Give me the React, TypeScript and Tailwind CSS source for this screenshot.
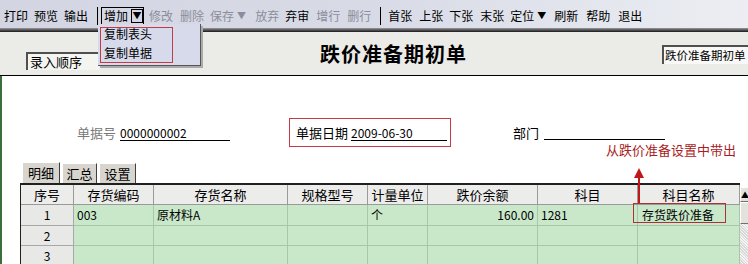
import { ReactNode } from "react";

type Tool = { label: string; ml: string; off?: boolean; caret?: boolean };

const leftTools: Tool[] = [
  { label: "打印", ml: "ml-[4px]" },
  { label: "预览", ml: "ml-[6px]" },
  { label: "输出", ml: "ml-[6px]" },
];

const midTools: Tool[] = [
  { label: "修改", ml: "ml-[5px]", off: true },
  { label: "删除", ml: "ml-[7px]", off: true },
  { label: "保存", ml: "ml-[6px]", off: true, caret: true },
  { label: "放弃", ml: "ml-[9px]", off: true },
  { label: "弃审", ml: "ml-[6px]" },
  { label: "增行", ml: "ml-[7px]", off: true },
  { label: "删行", ml: "ml-[7px]", off: true },
];

const navTools: Tool[] = [
  { label: "首张", ml: "ml-[7px]" },
  { label: "上张", ml: "ml-[7px]" },
  { label: "下张", ml: "ml-[6px]" },
  { label: "末张", ml: "ml-[7px]" },
  { label: "定位", ml: "ml-[6px]", caret: true },
  { label: "刷新", ml: "ml-[8px]" },
  { label: "帮助", ml: "ml-[8px]" },
  { label: "退出", ml: "ml-[8px]" },
];

function ToolItem({ t }: { t: Tool }) {
  return (
    <span className={`${t.ml} flex items-center whitespace-nowrap ${t.off ? "text-[#8b8d9c]" : "text-black"}`}>
      {t.label}
      {t.caret && <span className="ml-[3px] text-[9px]">▼</span>}
    </span>
  );
}

const cols = [
  { title: "序号", w: "w-[53px]" },
  { title: "存货编码", w: "w-[80px]" },
  { title: "存货名称", w: "w-[134px]" },
  { title: "规格型号", w: "w-[80px]" },
  { title: "计量单位", w: "w-[60px]" },
  { title: "跌价余额", w: "w-[110px]" },
  { title: "科目", w: "w-[100px]" },
  { title: "科目名称", w: "w-[102px]" },
];

const rows = [
  ["1", "003", "原材料A", "", "个", "160.00", "1281", "存货跌价准备"],
  ["2", "", "", "", "", "", "", ""],
  ["3", "", "", "", "", "", "", ""],
];

function Cell({ w, children, className }: { w: string; children?: ReactNode; className?: string }) {
  return <div className={`${w} shrink-0 flex items-center border-r border-b whitespace-nowrap ${className ?? ""}`}>{children}</div>;
}

export default function App() {
  return (
    <div
      className="relative w-[748px] h-[264px] overflow-hidden bg-white text-[12px] text-black"
      style={{ fontFamily: '"Noto Sans CJK SC", "Liberation Sans", sans-serif' }}
    >
      {/* toolbar */}
      <div className="h-[28px] flex items-center pt-[3px] bg-gradient-to-r from-[#d3d6e2] via-[#d8dbe6] to-[#eceef3]">
        {leftTools.map((t) => (
          <ToolItem key={t.label} t={t} />
        ))}
        <span className="ml-[9px] w-px h-[18px] bg-black" />
        <span className="ml-[3px] flex items-center h-[18px] border border-black pl-[2px]">
          增加
          <span className="ml-[3px] w-[12px] h-[14px] border border-black flex items-center justify-center text-[9px] leading-none">▼</span>
        </span>
        {midTools.map((t) => (
          <ToolItem key={t.label} t={t} />
        ))}
        <span className="ml-[9px] w-px h-[18px] bg-black" />
        {navTools.map((t) => (
          <ToolItem key={t.label} t={t} />
        ))}
      </div>
      <div className="h-[4px] bg-gradient-to-b from-[#9a9aa0] to-[#1a1a1a]" />

      {/* header */}
      <div className="h-[44px] flex items-start bg-[#ebebe7] border-b border-black">
        <div className="ml-[26px] mt-[20px] w-[74px] h-[18px] flex items-center pl-[2px] bg-[#f4f4f0] border-l-2 border-t-2 border-[#505050] text-[13px] whitespace-nowrap">
          录入顺序
        </div>
        <div className="ml-[220px] mt-[9px] text-[20px] font-bold tracking-[1px] leading-[26px] whitespace-nowrap">跌价准备期初单</div>
        <div className="ml-auto mt-[13px] w-[86px] h-[19px] flex items-center pl-[1px] bg-[#f8f8f6] border-l-2 border-t-2 border-[#505050] text-[11.5px] whitespace-nowrap overflow-hidden">
          跌价准备期初单
        </div>
      </div>

      {/* body */}
      <div className="h-[188px] border-l-2 border-[#3c6e3c] pt-[42px]">
        <div className="h-[29px] flex items-center pl-[75px]">
          <div className="w-[212px] flex items-center">
            <span className="text-[#7a7a7a] text-[13px]">单据号</span>
            <span className="ml-[4px] w-[110px] border-b border-black leading-[15px]">0000000002</span>
          </div>
          <div className="w-[162px] h-[29px] flex items-center pl-[6px] border border-[#c43a45]">
            <span className="text-[13px]">单据日期</span>
            <span className="ml-[3px] w-[96px] border-b border-black leading-[15px]">2009-06-30</span>
          </div>
          <div className="ml-[62px] flex items-center">
            <span className="text-[13px]">部门</span>
            <span className="ml-[5px] w-[121px] h-[15px] border-b border-black" />
          </div>
        </div>

        {/* tabs */}
        <div className="mt-[15px] h-[21px] flex items-end pl-[20px] text-[13px]">
          <div className="w-[38px] h-[21px] flex items-center justify-center bg-[#d8d5cf] border-t border-l border-white border-r border-r-[#404040]">明细</div>
          <div className="ml-[2px] w-[35px] h-[20px] flex items-center justify-center bg-[#d8d5cf] border-t border-l border-white border-r border-r-[#404040]">汇总</div>
          <div className="ml-[2px] w-[37px] h-[20px] flex items-center justify-center bg-[#d8d5cf] border-t border-l border-white border-r border-r-[#404040]">设置</div>
        </div>

        {/* table */}
        <div className="ml-[18px] flex">
          <div className="border-l border-t-2 border-[#202020]">
            <div className="flex h-[20px] bg-[#ececea] text-[13px]">
              {cols.map((c) => (
                <Cell key={c.title} w={c.w} className="justify-center border-[#9a9a9a]">
                  {c.title}
                </Cell>
              ))}
            </div>
            {rows.map((r, i) => (
              <div key={i} className={`flex ${i === 0 ? "h-[21px]" : "h-[20px]"}`}>
                {r.map((v, j) => (
                  <Cell
                    key={j}
                    w={cols[j].w}
                    className={
                      j === 0
                        ? "justify-center bg-[#e8e8e6] border-[#a8a8a8]"
                        : `bg-[#c9e8c9] border-[#aac6aa] ${j === 7 ? "pl-[4px]" : "px-[3px]"} ${j === 5 ? "justify-end" : ""}`
                    }
                  >
                    {v}
                  </Cell>
                ))}
              </div>
            ))}
          </div>
          {/* scrollbar */}
          <div className="w-[12px] mt-[4px] flex flex-col">
            <div className="h-[15px] bg-[#e4e2dc] border-t border-l border-white border-r border-b border-r-[#707070] border-b-[#707070] flex items-center justify-center text-[8px] leading-none">▲</div>
            <div className="h-[22px] bg-[#e4e2dc] border-t border-l border-white border-r border-b border-r-[#707070] border-b-[#707070]" />
            <div className="flex-1 bg-[repeating-linear-gradient(45deg,#d8d8d8_0px,#d8d8d8_1px,#f4f4f4_1px,#f4f4f4_2px)]" />
          </div>
        </div>
      </div>

      {/* dropdown of 增加 */}
      <div className="absolute left-[98px] top-[24px] w-[103px] h-[42px] bg-[#d6daea] border-r border-b border-[#555] shadow-[2px_2px_0_#aaa]">
        <div className="h-[19px] flex items-center pl-[6px]">复制表头</div>
        <div className="h-[19px] flex items-center pl-[6px]">复制单据</div>
        <div className="absolute left-[2px] top-[3px] w-[73px] h-[36px] border border-[#c43a45]" />
      </div>

      {/* annotation */}
      <div className="absolute left-[606px] top-[140px] text-[13px] text-[#a81c24] whitespace-nowrap">从跌价准备设置中带出</div>
      <svg className="absolute left-[632px] top-[166px]" width="16" height="48" viewBox="0 0 16 48">
        <polygon points="7,2 2,12 12,12" fill="#c01818" />
        <rect x="6" y="11" width="2" height="26" fill="#c01818" />
      </svg>
      <div className="absolute left-[633px] top-[203px] w-[93px] h-[20px] border border-[#b03038]" />
    </div>
  );
}
